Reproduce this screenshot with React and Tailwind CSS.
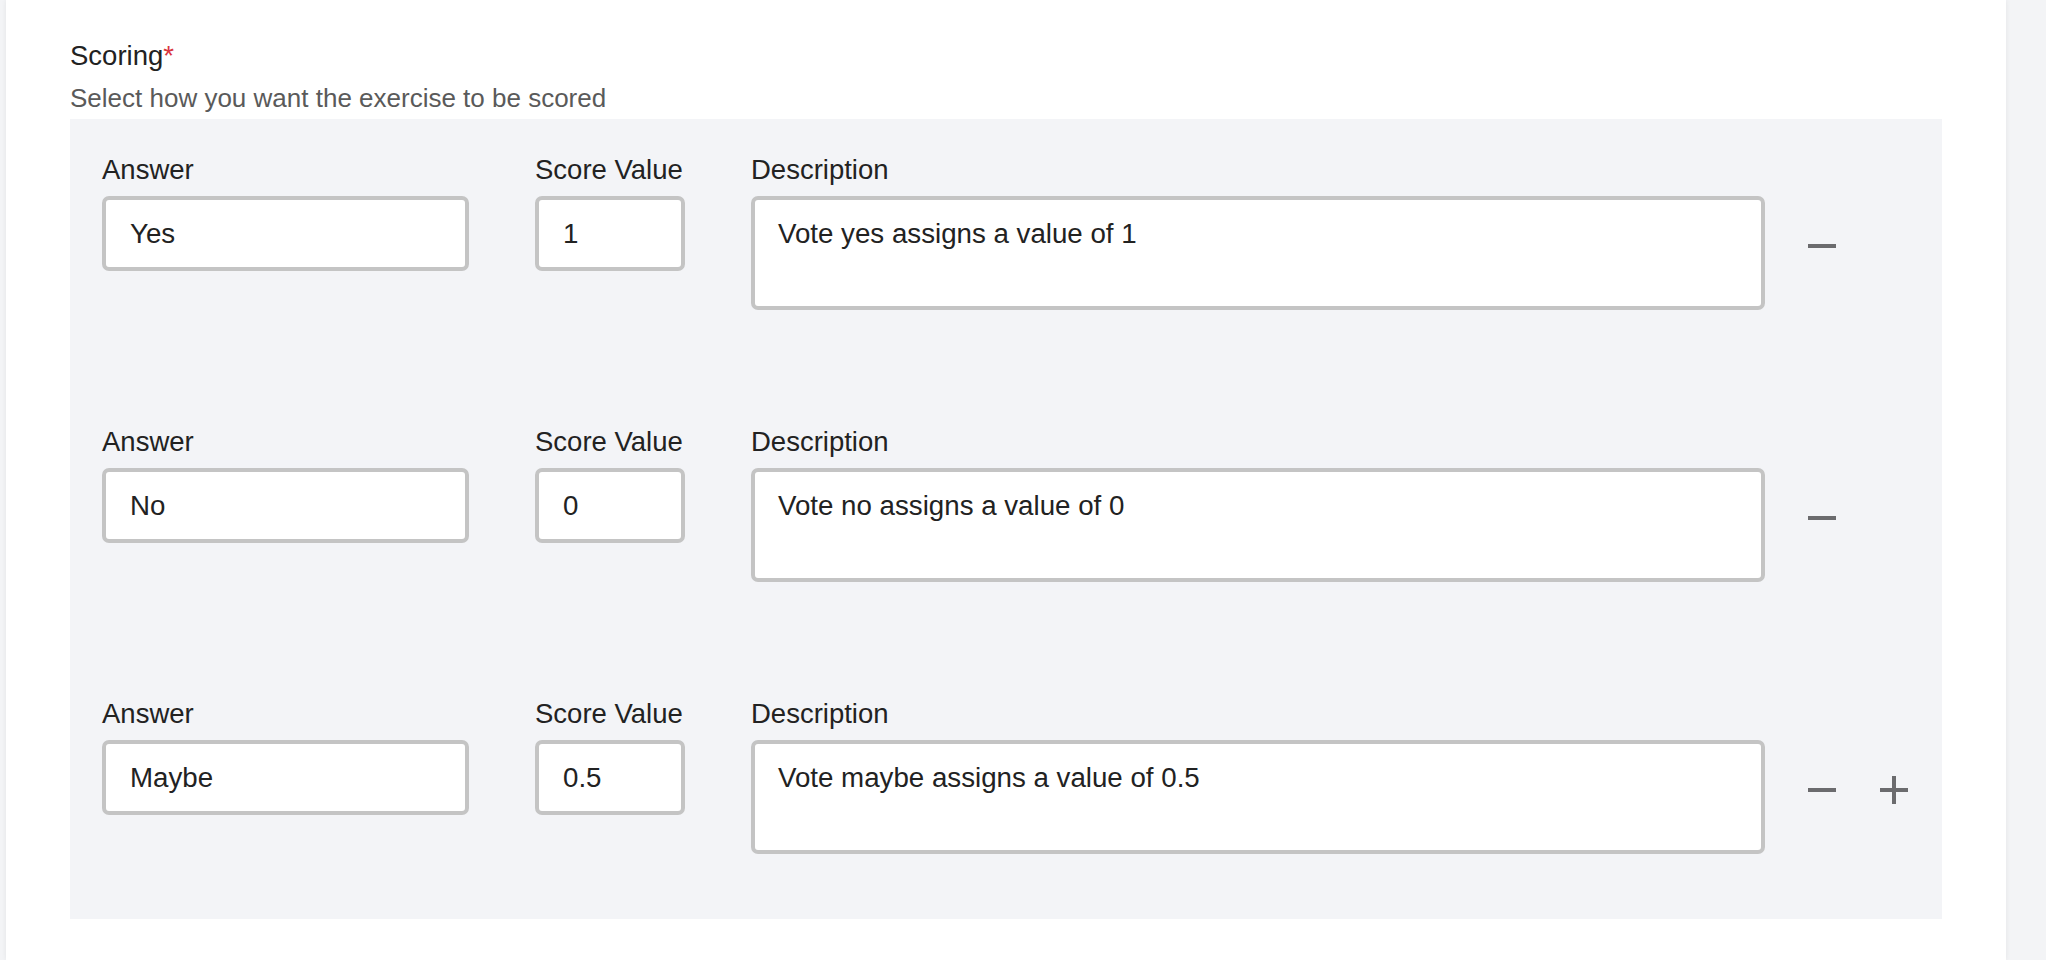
import React from "react";

const rows = [
  { answer: "Yes", score: "1", desc: "Vote yes assigns a value of 1", plus: false },
  { answer: "No", score: "0", desc: "Vote no assigns a value of 0", plus: false },
  { answer: "Maybe", score: "0.5", desc: "Vote maybe assigns a value of 0.5", plus: true },
];

function MinusIcon() {
  return (
    <svg width="28" height="28" viewBox="0 0 28 28" className="block">
      <rect x="0" y="12" width="28" height="4" fill="#6b6b6e" />
    </svg>
  );
}

function PlusIcon() {
  return (
    <svg width="28" height="28" viewBox="0 0 28 28" className="block">
      <rect x="0" y="12" width="28" height="4" fill="#6b6b6e" />
      <rect x="12" y="0" width="4" height="28" fill="#6b6b6e" />
    </svg>
  );
}

function Row({ r }) {
  return (
    <div className="flex items-start">
      <div className="w-[367px] shrink-0">
        <label className="block text-[27.5px] leading-[36px] text-[#222]">Answer</label>
        <input
          readOnly
          defaultValue={r.answer}
          className="mt-[8px] block w-full h-[75px] border-[4px] border-[#c4c4c4] rounded-[7px] bg-white pl-[24px] text-[27.7px] text-[#222] outline-none"
        />
      </div>
      <div className="ml-[66px] w-[150px] shrink-0">
        <label className="block text-[27.5px] leading-[36px] text-[#222] whitespace-nowrap">Score Value</label>
        <input
          readOnly
          defaultValue={r.score}
          className="mt-[8px] block w-full h-[75px] border-[4px] border-[#c4c4c4] rounded-[7px] bg-white pl-[24px] text-[27.7px] text-[#222] outline-none"
        />
      </div>
      <div className="ml-[66px] w-[1014px] shrink-0">
        <label className="block text-[27.5px] leading-[36px] text-[#222]">Description</label>
        <textarea
          readOnly
          defaultValue={r.desc}
          className="mt-[8px] block w-full h-[114px] border-[4px] border-[#c4c4c4] rounded-[7px] bg-white pl-[23px] pt-[16px] text-[27.7px] leading-[36px] text-[#222] outline-none resize-none"
        />
      </div>
      <div className="ml-[43px] mt-[80px] flex gap-[44px]">
        <MinusIcon />
        {r.plus && <PlusIcon />}
      </div>
    </div>
  );
}

export default function App() {
  return (
    <div className="min-h-[960px] bg-[#f3f4f6] font-['Liberation_Sans',Arial,sans-serif]">
      <div className="ml-[6px] w-[2000px] min-h-[960px] bg-white shadow-[0_0_5px_rgba(0,0,0,0.07)] pl-[64px] pt-[40px]">
        <div className="text-[27.5px] leading-[32px] text-[#222]">
          Scoring<span className="text-[#d9363e]">*</span>
        </div>
        <div className="mt-[10px] text-[26px] leading-[32px] text-[#5a5a5a]">
          Select how you want the exercise to be scored
        </div>
        <div className="mt-[5px] w-[1872px] bg-[#f3f4f7] pl-[32px] pt-[33px] pb-[65px] flex flex-col gap-[114px]">
          {rows.map((r, i) => (
            <Row key={i} r={r} />
          ))}
        </div>
      </div>
    </div>
  );
}
